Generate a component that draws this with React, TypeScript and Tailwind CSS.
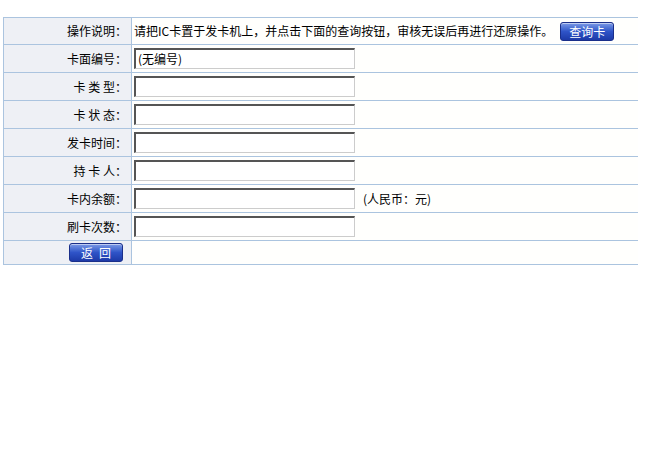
const rows: { label: string; value?: string; suffix?: string }[] = [
  { label: "卡面编号：", value: "(无编号)" },
  { label: "卡 类 型：" },
  { label: "卡 状 态：" },
  { label: "发卡时间：" },
  { label: "持 卡 人：" },
  { label: "卡内余额：", suffix: "(人民币：元)" },
  { label: "刷卡次数：" },
];

function BlueButton({ text }: { text: string }) {
  return (
    <button className="h-[19px] w-[54px] rounded-[3px] border border-[#1a2f8a] bg-gradient-to-b from-[#7d9ae6] via-[#2f54c8] to-[#1d3aa8] text-[12px] leading-[17px] text-white shadow-[inset_0_1px_0_rgba(255,255,255,0.5)]">
      {text}
    </button>
  );
}

function Field({ value }: { value?: string }) {
  return (
    <div className="h-[21px] w-[221px] border-t-2 border-l-2 border-r border-b border-t-[#555] border-l-[#555] border-r-[#ccc] border-b-[#ccc] bg-white px-[2px] text-[12px] leading-[17px]">
      {value}
    </div>
  );
}

export default function App() {
  return (
    <div className="h-[450px] w-[660px] bg-white pt-[17px] pl-[3px] font-['Noto_Sans_CJK_SC',sans-serif] text-[12px] text-black">
      <table className="w-[635px] border-collapse">
        <tbody>
          <tr className="h-[27px]">
            <td className="w-[128px] border border-[#abc4df] bg-[#eef0f5] pr-[4px] text-right">操作说明：</td>
            <td className="border-y border-[#abc4df] bg-[#fffffd] pl-[2px]">
              <div className="flex items-center">
                <span>请把IC卡置于发卡机上，并点击下面的查询按钮，审核无误后再进行还原操作。</span>
                <span className="ml-[7px] flex">
                  <BlueButton text="查询卡" />
                </span>
              </div>
            </td>
          </tr>
          {rows.map((r) => (
            <tr key={r.label} className="h-[28px]">
              <td className="border border-[#abc4df] bg-[#eef0f5] pr-[4px] text-right">{r.label}</td>
              <td className="border-y border-[#abc4df] bg-[#fffffd] pl-[2px]">
                <div className="flex items-center">
                  <Field value={r.value} />
                  {r.suffix && <span className="ml-[8px]">{r.suffix}</span>}
                </div>
              </td>
            </tr>
          ))}
          <tr className="h-[24px]">
            <td className="border border-[#abc4df] bg-[#eef0f5] pr-[8px] text-right">
              <BlueButton text={"返\u2002回"} />
            </td>
            <td className="border-y border-[#abc4df] bg-[#fffffd]"></td>
          </tr>
        </tbody>
      </table>
    </div>
  );
}
